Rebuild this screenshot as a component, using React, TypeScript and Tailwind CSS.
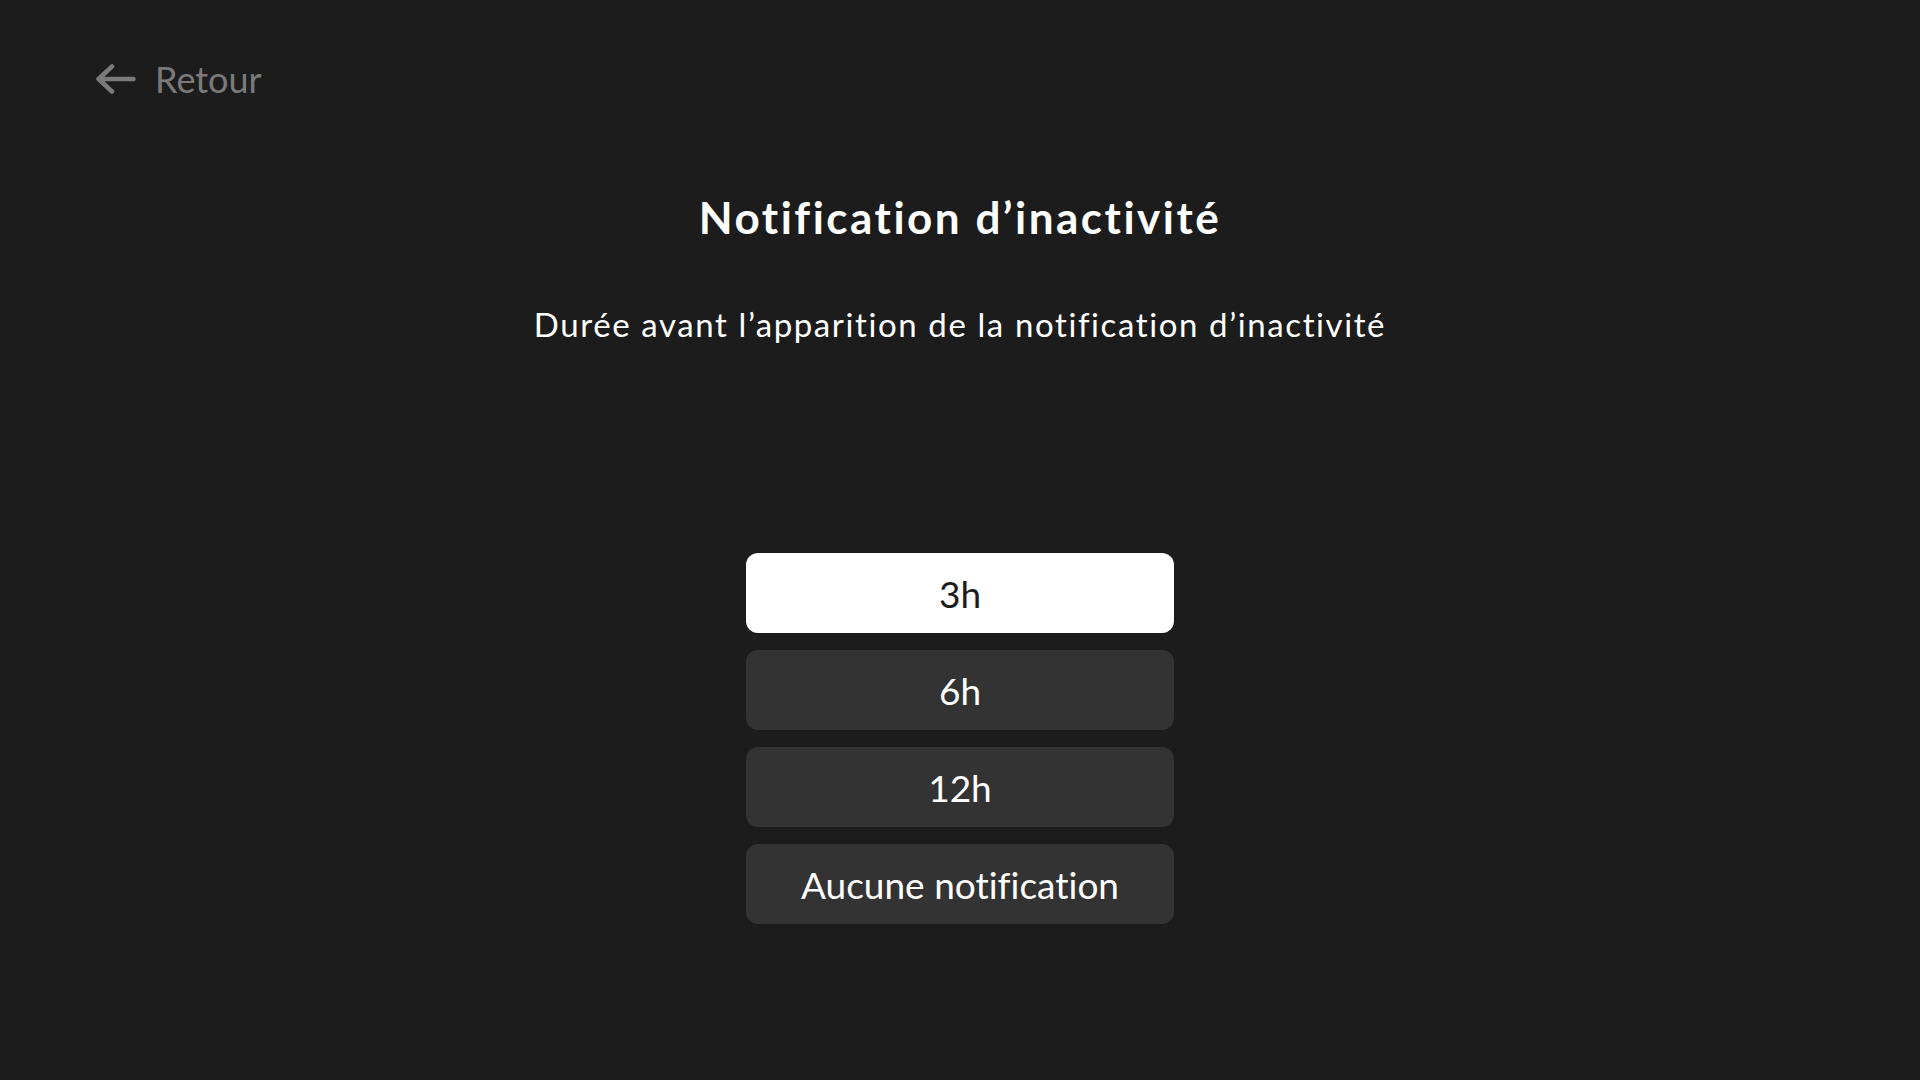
import { useState } from 'react';

const options = ['3h', '6h', '12h', 'Aucune notification'];

export default function App() {
  const [selected, setSelected] = useState('3h');

  return (
    <div
      className="min-h-screen w-full bg-[#1c1c1c] text-white flex flex-col"
      style={{ fontFamily: 'Lato, "Noto Sans", sans-serif' }}
    >
      {/* Back */}
      <div className="pt-[61px] pl-[96px]">
        <button className="flex items-center gap-[19px] text-[#7a7a7a] text-[36px] leading-none">
          <svg width="40" height="30" viewBox="0 0 40 30" fill="none">
            <path
              d="M16 2.5 L2.5 15 L16 27.5 M2.5 15 H37.5"
              stroke="currentColor"
              strokeWidth="4.5"
              strokeLinecap="round"
              strokeLinejoin="round"
            />
          </svg>
          <span>Retour</span>
        </button>
      </div>

      <h1 className="mt-[98px] text-center text-[44px] leading-none font-bold tracking-[2.5px]">
        Notification d’inactivité
      </h1>
      <p className="mt-[69px] text-center text-[33px] leading-none tracking-[1.6px]">
        Durée avant l’apparition de la notification d’inactivité
      </p>

      <div className="mt-[212px] flex flex-col items-center gap-[17px]">
        {options.map((opt) => (
          <button
            key={opt}
            onClick={() => setSelected(opt)}
            className={
              selected === opt
                ? 'w-[428px] h-[80px] rounded-[12px] bg-white text-[#1c1c1c] text-[37px] leading-none [font-variant-ligatures:none]'
                : 'w-[428px] h-[80px] rounded-[12px] bg-[#333333] text-white text-[37px] leading-none [font-variant-ligatures:none]'
            }
          >
            {opt}
          </button>
        ))}
      </div>
    </div>
  );
}
